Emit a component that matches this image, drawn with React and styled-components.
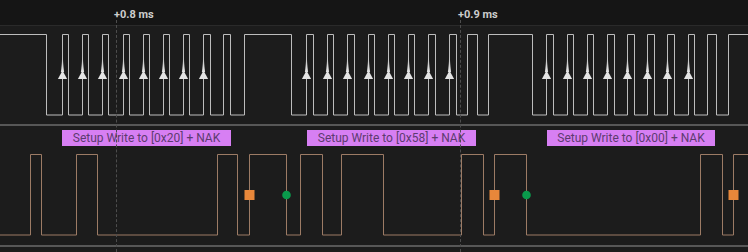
import React from 'react'
import styled, { createGlobalStyle } from 'styled-components'

const GlobalStyle = createGlobalStyle`
  html, body {
    margin: 0;
    padding: 0;
    background: #1c1c1c;
    overflow: hidden;
  }
  * { box-sizing: border-box; }
`

const scl = {
  color: '#bdbdbd',
  high: 8.5,
  low: 89,
  start: 'high',
  edges: [
    46, 62, 68, 82, 88, 102, 108, 123, 129, 143, 149, 163, 169, 183, 189, 203, 210, 223, 230, 244, 291,
    306, 313, 327, 333, 347, 354, 368, 374, 388, 394, 408, 414, 428, 435, 449, 456, 467, 477, 488, 532,
    546, 553, 567, 573, 587, 593, 607, 614, 627, 634, 647, 654, 667, 674, 688, 694, 707, 716, 728,
  ],
  arrows: [62, 82, 102, 123, 143, 163, 183, 203, 306, 327, 347, 368, 388, 408, 428, 449, 546, 567, 587, 607, 627, 647, 667, 688],
}

const sda = {
  color: '#9c7b65',
  high: 28.5,
  low: 109,
  start: 'low',
  edges: [30, 41, 76, 97, 217, 237, 249, 286, 300, 322, 341, 383, 461, 483, 494, 526, 700, 722, 733],
  stops: [249, 494, 733],
  starts: [286, 526],
}

const frames = [
  { left: 62, width: 169, text: 'Setup Write to [0x20] + NAK' },
  { left: 307, width: 169, text: 'Setup Write to [0x58] + NAK' },
  { left: 547, width: 168, text: 'Setup Write to [0x00] + NAK' },
]

const markers = [
  { x: 116, label: '+0.8 ms' },
  { x: 460, label: '+0.9 ms' },
]

function wavePath({ high, low, start, edges }) {
  let level = start === 'high' ? high : low
  let d = `M0 ${level}`
  edges.forEach(x => {
    const next = level === high ? low : high
    d += ` H${x + 0.5} V${next}`
    level = next
  })
  return d + ' H748'
}

const Page = styled.div`
  position: relative;
  width: 748px;
  height: 252px;
  background: #1c1c1c;
  font-family: Roboto, "Liberation Sans", sans-serif;
  display: flex;
  flex-direction: column;
`

const Ruler = styled.div`
  position: relative;
  height: 26px;
  flex: none;
  background: #151515;
  border-bottom: 1px solid #2a2a2a;
`

const RulerLabel = styled.span`
  position: absolute;
  top: 9px;
  font-size: 11px;
  font-weight: 700;
  line-height: 12px;
  color: #cdcdcd;
  white-space: nowrap;
`

const Channel = styled.div`
  position: relative;
  height: ${p => p.$height}px;
  flex: none;
  border-bottom: 2px solid #575757;
`

const Wave = styled.svg`
  display: block;
  position: absolute;
  inset: 0;
`

const Cursor = styled.div`
  position: absolute;
  top: 20px;
  bottom: 0;
  width: 0;
  border-left: 1px dashed #4d4d4d;
  pointer-events: none;
`

const Frame = styled.div`
  position: absolute;
  top: 4px;
  height: 16px;
  background: #d77ff3;
  color: #5d3b70;
  font-size: 12px;
  line-height: 16px;
  text-align: center;
  white-space: nowrap;
`

function Arrow({ x }) {
  const cx = x + 0.5
  return (
    <g>
      <polygon points={`${cx - 1.6},46 ${cx + 1.6},46 ${cx},28`} fill="url(#glow)" />
      <polygon points={`${cx - 4.6},53 ${cx + 4.6},53 ${cx},44.5`} fill="#e4e4e4" />
    </g>
  )
}

export default function App() {
  return (
    <Page>
      <GlobalStyle />
      <Ruler>
        {markers.map(m => (
          <RulerLabel key={m.x} style={{ left: m.x - 2 }}>{m.label}</RulerLabel>
        ))}
      </Ruler>
      <Channel $height={100}>
        <Wave width="748" height="98" viewBox="0 0 748 98">
          <defs>
            <linearGradient id="glow" x1="0" y1="0" x2="0" y2="1">
              <stop offset="0" stopColor="#e4e4e4" stopOpacity="0" />
              <stop offset="1" stopColor="#e4e4e4" stopOpacity="1" />
            </linearGradient>
          </defs>
          <path d={wavePath(scl)} fill="none" stroke={scl.color} strokeWidth="1" />
          {scl.arrows.map(x => <Arrow key={x} x={x} />)}
        </Wave>
      </Channel>
      <Channel $height={121}>
        <Wave width="748" height="119" viewBox="0 0 748 119">
          <path d={wavePath(sda)} fill="none" stroke={sda.color} strokeWidth="1" />
          {sda.stops.map(x => (
            <rect key={x} x={x - 4.5} y={64} width={10} height={10} fill="#e8873a" />
          ))}
          {sda.starts.map(x => (
            <circle key={x} cx={x + 0.5} cy={69} r={4.3} fill="#0a9a4c" />
          ))}
        </Wave>
        {frames.map(f => (
          <Frame key={f.left} style={{ left: f.left, width: f.width }}>{f.text}</Frame>
        ))}
      </Channel>
      {markers.map(m => (
        <Cursor key={m.x} style={{ left: m.x }} />
      ))}
    </Page>
  )
}
